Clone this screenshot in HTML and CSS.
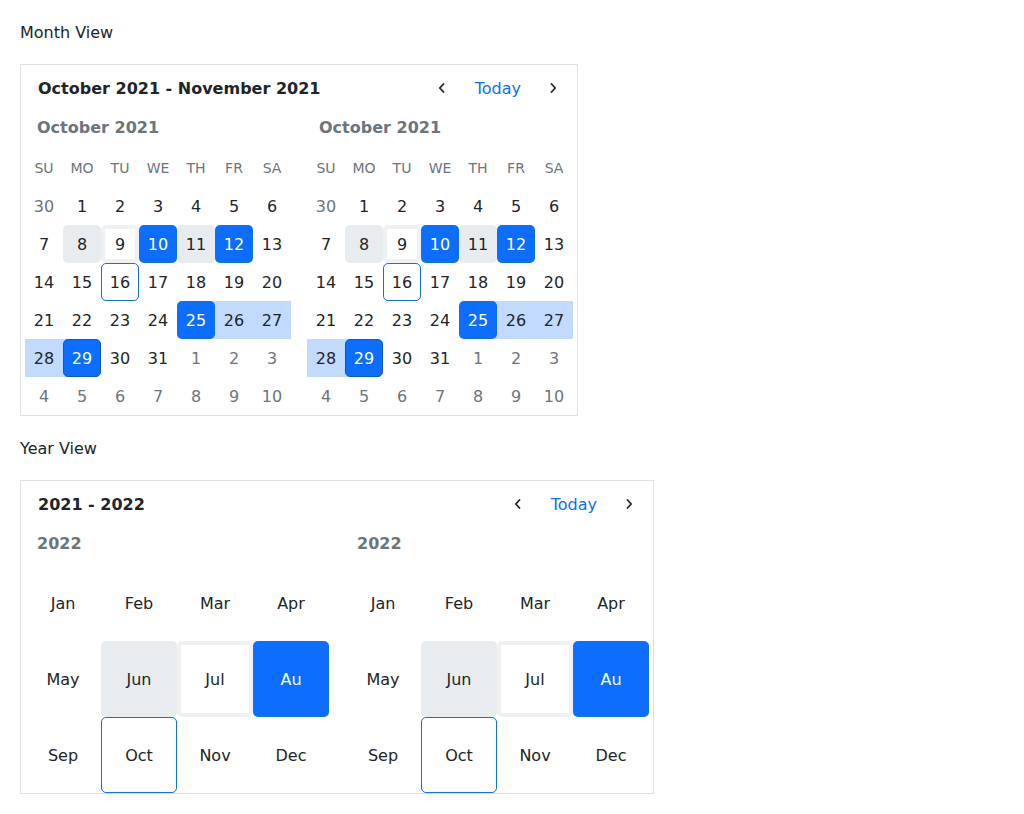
FILE: index.html
```html
<!DOCTYPE html>
<html lang="en">
<head>
<meta charset="utf-8">
<title>Calendar</title>
<link rel="stylesheet" href="styles.css">
</head>
<body>
<div class="section-label">Month View</div>
<div class="card">
  <div class="card-header">
    <div class="card-title">October 2021 - November 2021</div>
    <div class="nav">
      <button class="nav-btn" aria-label="Previous"><svg width="8" height="10" viewBox="0 0 8 10"><path d="M5.5 1 L1.8 5 L5.5 9" fill="none" stroke="#212529" stroke-width="1.8" stroke-linecap="round" stroke-linejoin="round"/></svg></button>
      <button class="today-btn">Today</button>
      <button class="nav-btn" aria-label="Next"><svg width="8" height="10" viewBox="0 0 8 10"><path d="M2.5 1 L6.2 5 L2.5 9" fill="none" stroke="#212529" stroke-width="1.8" stroke-linecap="round" stroke-linejoin="round"/></svg></button>
    </div>
  </div>
  <div class="panels">
    <div class="panel">
      <div class="panel-title">October 2021</div>
      <div class="days">
        <div class="wd">Su</div><div class="wd">Mo</div><div class="wd">Tu</div><div class="wd">We</div><div class="wd">Th</div><div class="wd">Fr</div><div class="wd">Sa</div>
        <div class="d muted"><span>30</span></div><div class="d"><span>1</span></div><div class="d"><span>2</span></div><div class="d"><span>3</span></div><div class="d"><span>4</span></div><div class="d"><span>5</span></div><div class="d"><span>6</span></div>
        <div class="d"><span>7</span></div><div class="d gray"><span>8</span></div><div class="d ring"><span>9</span></div><div class="d sel"><span>10</span></div><div class="d gray"><span>11</span></div><div class="d sel"><span>12</span></div><div class="d"><span>13</span></div>
        <div class="d"><span>14</span></div><div class="d"><span>15</span></div><div class="d outline"><span>16</span></div><div class="d"><span>17</span></div><div class="d"><span>18</span></div><div class="d"><span>19</span></div><div class="d"><span>20</span></div>
        <div class="d"><span>21</span></div><div class="d"><span>22</span></div><div class="d"><span>23</span></div><div class="d"><span>24</span></div><div class="d sel range-start"><span>25</span></div><div class="d range"><span>26</span></div><div class="d range"><span>27</span></div>
        <div class="d range"><span>28</span></div><div class="d sel range-end focus"><span>29</span></div><div class="d"><span>30</span></div><div class="d"><span>31</span></div><div class="d muted"><span>1</span></div><div class="d muted"><span>2</span></div><div class="d muted"><span>3</span></div>
        <div class="d muted"><span>4</span></div><div class="d muted"><span>5</span></div><div class="d muted"><span>6</span></div><div class="d muted"><span>7</span></div><div class="d muted"><span>8</span></div><div class="d muted"><span>9</span></div><div class="d muted"><span>10</span></div>
      </div>
    </div>
    <div class="panel">
      <div class="panel-title">October 2021</div>
      <div class="days">
        <div class="wd">Su</div><div class="wd">Mo</div><div class="wd">Tu</div><div class="wd">We</div><div class="wd">Th</div><div class="wd">Fr</div><div class="wd">Sa</div>
        <div class="d muted"><span>30</span></div><div class="d"><span>1</span></div><div class="d"><span>2</span></div><div class="d"><span>3</span></div><div class="d"><span>4</span></div><div class="d"><span>5</span></div><div class="d"><span>6</span></div>
        <div class="d"><span>7</span></div><div class="d gray"><span>8</span></div><div class="d ring"><span>9</span></div><div class="d sel"><span>10</span></div><div class="d gray"><span>11</span></div><div class="d sel"><span>12</span></div><div class="d"><span>13</span></div>
        <div class="d"><span>14</span></div><div class="d"><span>15</span></div><div class="d outline"><span>16</span></div><div class="d"><span>17</span></div><div class="d"><span>18</span></div><div class="d"><span>19</span></div><div class="d"><span>20</span></div>
        <div class="d"><span>21</span></div><div class="d"><span>22</span></div><div class="d"><span>23</span></div><div class="d"><span>24</span></div><div class="d sel range-start"><span>25</span></div><div class="d range"><span>26</span></div><div class="d range"><span>27</span></div>
        <div class="d range"><span>28</span></div><div class="d sel range-end focus"><span>29</span></div><div class="d"><span>30</span></div><div class="d"><span>31</span></div><div class="d muted"><span>1</span></div><div class="d muted"><span>2</span></div><div class="d muted"><span>3</span></div>
        <div class="d muted"><span>4</span></div><div class="d muted"><span>5</span></div><div class="d muted"><span>6</span></div><div class="d muted"><span>7</span></div><div class="d muted"><span>8</span></div><div class="d muted"><span>9</span></div><div class="d muted"><span>10</span></div>
      </div>
    </div>
  </div>
</div>

<div class="section-label">Year View</div>
<div class="card">
  <div class="card-header">
    <div class="card-title">2021 - 2022</div>
    <div class="nav">
      <button class="nav-btn" aria-label="Previous"><svg width="8" height="10" viewBox="0 0 8 10"><path d="M5.5 1 L1.8 5 L5.5 9" fill="none" stroke="#212529" stroke-width="1.8" stroke-linecap="round" stroke-linejoin="round"/></svg></button>
      <button class="today-btn">Today</button>
      <button class="nav-btn" aria-label="Next"><svg width="8" height="10" viewBox="0 0 8 10"><path d="M2.5 1 L6.2 5 L2.5 9" fill="none" stroke="#212529" stroke-width="1.8" stroke-linecap="round" stroke-linejoin="round"/></svg></button>
    </div>
  </div>
  <div class="panels">
    <div class="panel">
      <div class="panel-title">2022</div>
      <div class="months">
        <div class="m"><span>Jan</span></div><div class="m"><span>Feb</span></div><div class="m"><span>Mar</span></div><div class="m"><span>Apr</span></div>
        <div class="m"><span>May</span></div><div class="m gray"><span>Jun</span></div><div class="m ring"><span>Jul</span></div><div class="m sel"><span>Au</span></div>
        <div class="m"><span>Sep</span></div><div class="m outline"><span>Oct</span></div><div class="m"><span>Nov</span></div><div class="m"><span>Dec</span></div>
      </div>
    </div>
    <div class="panel">
      <div class="panel-title">2022</div>
      <div class="months">
        <div class="m"><span>Jan</span></div><div class="m"><span>Feb</span></div><div class="m"><span>Mar</span></div><div class="m"><span>Apr</span></div>
        <div class="m"><span>May</span></div><div class="m gray"><span>Jun</span></div><div class="m ring"><span>Jul</span></div><div class="m sel"><span>Au</span></div>
        <div class="m"><span>Sep</span></div><div class="m outline"><span>Oct</span></div><div class="m"><span>Nov</span></div><div class="m"><span>Dec</span></div>
      </div>
    </div>
  </div>
</div>
</body>
</html>
```

FILE: styles.css
```css
* { box-sizing: border-box; }

body {
  margin: 0;
  padding: 20px;
  font-family: "DejaVu Sans", sans-serif;
  font-size: 16px;
  color: #212529;
  background: #fff;
}

.section-label {
  line-height: 25px;
  margin-bottom: 19px;
}

.card {
  width: max-content;
  border: 1px solid #dee2e6;
  background: #fff;
  margin-bottom: 20px;
}

.card-header {
  height: 46px;
  display: flex;
  align-items: center;
  justify-content: space-between;
  padding: 0 8px 0 17px;
}

.card-title {
  font-weight: bold;
}

.nav {
  display: flex;
  align-items: center;
  gap: 4px;
}

.nav-btn {
  width: 32px;
  height: 32px;
  border: 0;
  background: transparent;
  padding: 0;
  display: flex;
  align-items: center;
  justify-content: center;
}

.today-btn {
  border: 0;
  background: transparent;
  font-family: inherit;
  font-size: 16px;
  color: #0d6efd;
  padding: 0 12px 0 13px;
  height: 32px;
}

.panels {
  display: flex;
  gap: 16px;
  padding: 0 4px;
}

.panel-title {
  height: 38px;
  line-height: 33px;
  padding-left: 12px;
  font-weight: bold;
  color: #6c757d;
}

.days {
  display: grid;
  grid-template-columns: repeat(7, 38px);
  grid-auto-rows: 38px;
}

.wd {
  display: flex;
  align-items: center;
  justify-content: center;
  font-size: 14px;
  text-transform: uppercase;
  color: #6c757d;
}

.d, .m {
  display: flex;
}

.d span, .m span {
  flex: 1;
  display: flex;
  align-items: center;
  justify-content: center;
  border-radius: 5px;
}

.d.muted span { color: #6c757d; }

.gray span { background: #e9ecef; }

.ring span {
  background: #fff;
  border: 4px solid #f0f1f3;
}

.sel span {
  background: #0d6efd;
  color: #fff;
}

.focus span {
  border: 1px solid #0a58ca;
}

.outline span {
  border: 1px solid #0d6efd;
}

.range { background: #c3daff; }
.range span { border-radius: 0; }

.range-start { background: linear-gradient(to right, transparent 50%, #c3daff 50%); }
.range-end { background: linear-gradient(to right, #c3daff 50%, transparent 50%); }

.months {
  display: grid;
  grid-template-columns: repeat(4, 76px);
  grid-auto-rows: 76px;
}
```
